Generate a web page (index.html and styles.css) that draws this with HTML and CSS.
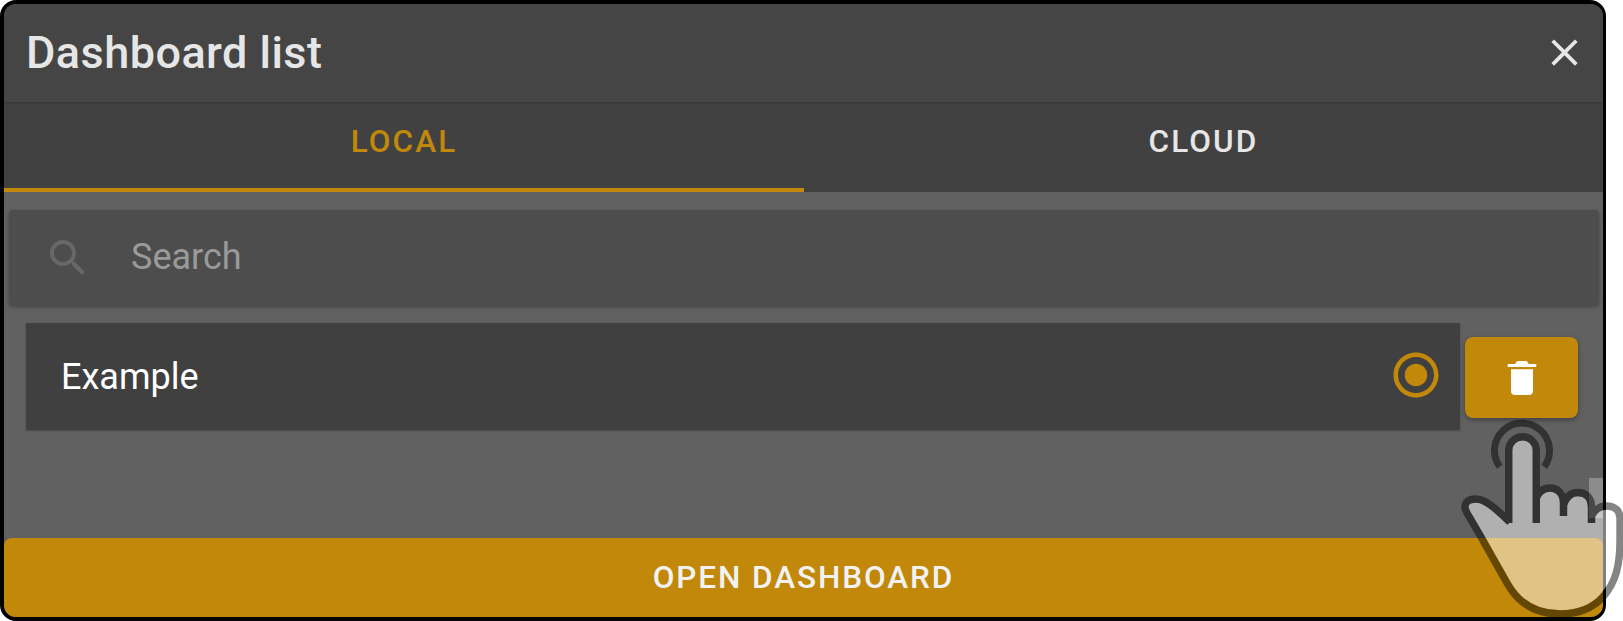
FILE: index.html
```html
<!DOCTYPE html>
<html lang="en">
<head>
<meta charset="utf-8">
<title>Dashboard list</title>
<link rel="stylesheet" href="styles.css">
</head>
<body>
<div class="frame">
  <header class="header">
    <h1 class="title">Dashboard list</h1>
    <svg class="close" viewBox="0 0 24 24"><path d="M19 6.41 17.59 5 12 10.59 6.41 5 5 6.41 10.59 12 5 17.59 6.41 19 12 13.41 17.59 19 19 17.59 13.41 12z"/></svg>
  </header>
  <nav class="tabs">
    <div class="tab tab-active">LOCAL</div>
    <div class="tab">CLOUD</div>
  </nav>
  <main class="content">
    <div class="search">
      <svg class="search-icon" viewBox="0 0 24 24"><path d="M15.5 14h-.79l-.28-.27C15.41 12.59 16 11.11 16 9.5 16 5.91 13.09 3 9.5 3S3 5.91 3 9.5 5.91 16 9.5 16c1.61 0 3.09-.59 4.23-1.57l.27.28v.79l5 4.99L20.49 19l-4.99-5zm-6 0C7.01 14 5 11.99 5 9.5S7.01 5 9.5 5 14 7.01 14 9.5 11.99 14 9.5 14z"/></svg>
      <span class="search-text">Search</span>
    </div>
    <div class="row">
      <div class="item">
        <span class="item-name">Example</span>
        <svg class="radio" viewBox="0 0 24 24"><path d="M12 7c-2.76 0-5 2.24-5 5s2.24 5 5 5 5-2.24 5-5-2.24-5-5-5zm0-5C6.48 2 2 6.48 2 12s4.48 10 10 10 10-4.48 10-10S17.52 2 12 2zm0 18c-4.42 0-8-3.58-8-8s3.58-8 8-8 8 3.58 8 8-3.58 8-8 8z"/></svg>
      </div>
      <button class="delete" type="button">
        <svg class="delete-icon" viewBox="0 0 48 48"><path d="M9.7 10H17.3C18 8 19 7 20.5 7H27.5C29 7 30 8 30.7 10H38.3V13H9.7ZM13 15.3H35V37C35 39.5 33.5 41 31 41H17C14.5 41 13 39.5 13 37Z"/></svg>
      </button>
    </div>
    <button class="open" type="button">OPEN DASHBOARD</button>
    <div class="scroll-thumb"></div>
  </main>
</div>
<svg class="hand" viewBox="1440 410 183 211" width="183" height="211">
  <defs>
    <mask id="hand-mask" maskUnits="userSpaceOnUse" x="1440" y="410" width="183" height="211">
      <rect x="1440" y="410" width="183" height="211" fill="#fff"/>
      <path class="hand-cut" d="M1508.7 523V450.5a13.8 13.8 0 0 1 27.6 0V523M1536.3 498C1539 491 1544 488 1550 488C1558 488 1563.5 494 1563.5 503V516M1563.5 505C1566 497 1571 492.5 1578 492.5C1586 492.5 1591.5 498 1591.5 507V523M1591.5 516C1594 510 1600 506 1606 506C1615 506 1620 511 1620 518V540C1620 565 1616 582 1603 597C1592 609 1578 614 1560 614C1535 614 1518 603 1507 583L1481 537L1467 513C1462 504 1467 499 1476 499C1486 499 1497 510 1510 522"/>
    </mask>
  </defs>
  <path class="hand-fill" mask="url(#hand-mask)" d="M1508.7 523V450.5a13.8 13.8 0 0 1 27.6 0V498C1539 491 1544 488 1550 488C1558 488 1563.5 494 1563.5 503C1566 497 1571 492.5 1578 492.5C1586 492.5 1591.5 498 1591.5 507V516C1594 510 1600 506 1606 506C1615 506 1620 511 1620 518V540C1620 565 1616 582 1603 597C1592 609 1578 614 1560 614C1535 614 1518 603 1507 583L1481 537L1467 513C1462 504 1467 499 1476 499C1486 499 1497 510 1510 522Z"/>
  <path class="hand-line" d="M1508.7 523V450.5a13.8 13.8 0 0 1 27.6 0V523M1536.3 498C1539 491 1544 488 1550 488C1558 488 1563.5 494 1563.5 503V516M1563.5 505C1566 497 1571 492.5 1578 492.5C1586 492.5 1591.5 498 1591.5 507V523M1591.5 516C1594 510 1600 506 1606 506C1615 506 1620 511 1620 518V540C1620 565 1616 582 1603 597C1592 609 1578 614 1560 614C1535 614 1518 603 1507 583L1481 537L1467 513C1462 504 1467 499 1476 499C1486 499 1497 510 1510 522"/>
  <path class="hand-ripple" d="M1499.8 466.8A27.5 27.5 0 1 1 1544.2 466.8"/>
</svg>
</body>
</html>
```

FILE: styles.css
```css
* { box-sizing: border-box; }

html, body {
  margin: 0;
  padding: 0;
  background: #fff;
}

body {
  width: 1623px;
  height: 621px;
  overflow: hidden;
  position: relative;
  font-family: Roboto, "Liberation Sans", sans-serif;
}

.frame {
  width: 1606px;
  height: 621px;
  display: flex;
  flex-direction: column;
  background: #616161;
  border: solid #000;
  border-width: 4px 3px 4px 4px;
  border-radius: 16px;
  overflow: hidden;
}

.header {
  flex: none;
  height: 98px;
  display: flex;
  align-items: center;
  justify-content: space-between;
  padding: 0 16px 2px 22px;
  background: #454545;
}

.title {
  margin: 0;
  font-size: 45px;
  font-weight: 500;
  letter-spacing: 0.46px;
  color: #e6e6e6;
}

.close {
  width: 45px;
  height: 45px;
  fill: #e6e6e6;
}

.tabs {
  flex: none;
  height: 90px;
  display: grid;
  grid-template-columns: 800px 1fr;
  background: #414141;
  box-shadow: inset 0 3px 3px -2px rgba(0, 0, 0, 0.22);
}

.tab {
  display: flex;
  align-items: center;
  justify-content: center;
  padding-bottom: 12px;
  font-size: 31.5px;
  font-weight: 500;
  letter-spacing: 2.1px;
  color: #e6e6e6;
}

.tab-active {
  padding-bottom: 8px;
  color: #c1880a;
  border-bottom: 4px solid #c1880a;
}

.content {
  flex: 1;
  min-height: 0;
  position: relative;
  display: flex;
  flex-direction: column;
}

.search {
  flex: none;
  height: 95px;
  margin: 18px 4px 0 5px;
  display: flex;
  align-items: center;
  gap: 39px;
  padding-left: 35px;
  background: #4d4d4d;
  border-radius: 4px;
  box-shadow: 0 2px 4px rgba(0, 0, 0, 0.3);
}

.search-icon {
  width: 48px;
  height: 48px;
  fill: #686868;
}

.search-text {
  font-size: 36px;
  line-height: 44px;
  padding-bottom: 2px;
  color: #9a9a9a;
}

.row {
  flex: none;
  margin: 18px 0 0 22px;
  display: flex;
  align-items: flex-start;
  gap: 5px;
}

.item {
  width: 1434px;
  height: 107px;
  display: flex;
  align-items: center;
  justify-content: space-between;
  padding: 0 17px 0 35px;
  background: #404040;
  box-shadow: 0 1px 2px rgba(0, 0, 0, 0.25);
}

.item-name {
  font-size: 36px;
  color: #fff;
}

.radio {
  width: 54px;
  height: 54px;
  fill: #c1880a;
  margin-bottom: 4px;
}

.delete {
  width: 113px;
  height: 81px;
  padding: 0;
  margin-top: 14px;
  display: flex;
  align-items: center;
  justify-content: center;
  background: #c1880a;
  border: 0;
  border-radius: 8px;
  box-shadow: 0 2px 5px rgba(0, 0, 0, 0.35);
}

.delete-icon {
  width: 48px;
  height: 48px;
  fill: #fff;
}

.open {
  flex: none;
  height: 79px;
  margin-top: auto;
  padding: 0;
  background: #c1880a;
  border: 0;
  border-radius: 8px;
  font-family: inherit;
  font-size: 31.5px;
  font-weight: 500;
  letter-spacing: 1.9px;
  color: #f2f2f2;
}

.scroll-thumb {
  position: absolute;
  right: 0;
  top: 286px;
  width: 14px;
  height: 40px;
  background: #8c8c8c;
}

.hand {
  position: absolute;
  left: 1440px;
  top: 410px;
  overflow: visible;
}

.hand-fill {
  fill: #fff;
  fill-opacity: 0.5;
}

.hand-cut {
  fill: none;
  stroke: #000;
  stroke-width: 7.4;
}

.hand-line {
  fill: none;
  stroke: #000;
  stroke-opacity: 0.48;
  stroke-width: 7.4;
  stroke-linejoin: round;
}

.hand-ripple {
  fill: none;
  stroke: #000;
  stroke-opacity: 0.48;
  stroke-width: 7;
}
```
